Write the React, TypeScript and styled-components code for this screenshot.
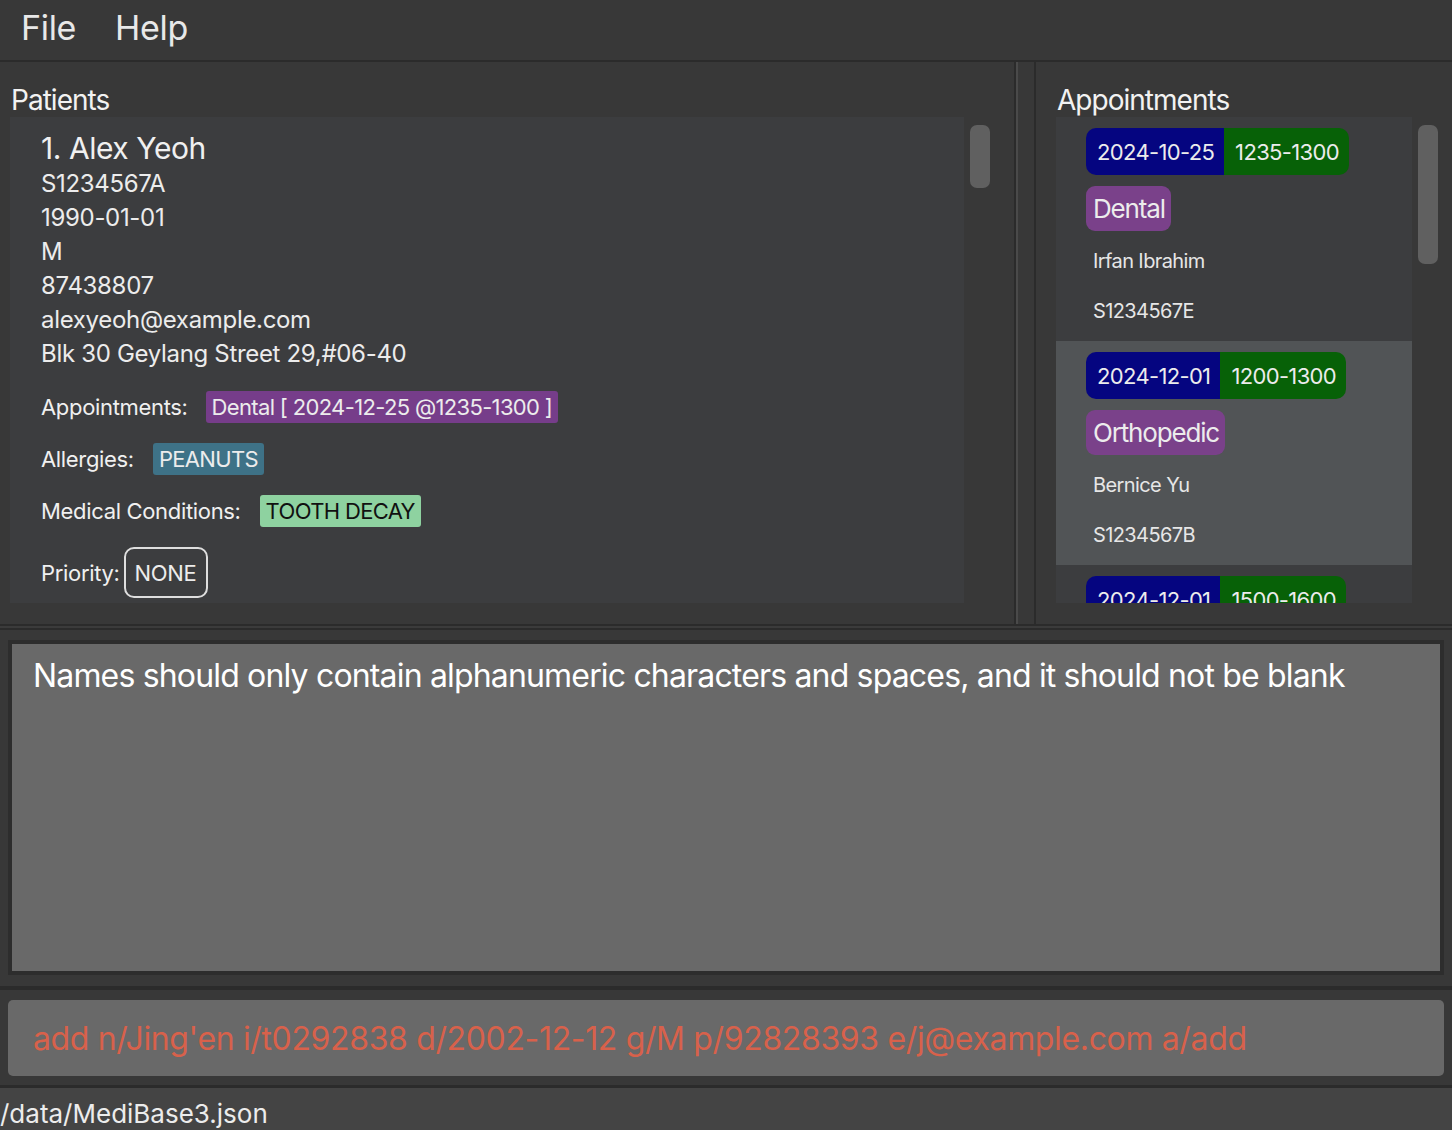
import styled, { createGlobalStyle } from "styled-components";

const GlobalStyle = createGlobalStyle`
  html, body {
    margin: 0;
    padding: 0;
    background: #383838;
    font-family: Inter, "Noto Sans", "Liberation Sans", sans-serif;
    color: #ececec;
  }
  * {
    box-sizing: border-box;
  }
`;

const Window = styled.div`
  width: 1452px;
  height: 1130px;
  display: flex;
  flex-direction: column;
  overflow: hidden;
  background: #383838;
  letter-spacing: -0.02em;
`;

const MenuBar = styled.div`
  height: 62px;
  flex-shrink: 0;
  display: flex;
  align-items: center;
  gap: 39px;
  padding: 0 0 6px 21px;
  border-bottom: 2px solid #2b2b2b;
  font-size: 34px;
  color: #e8e8e8;
`;

const MenuItem = styled.span`
  cursor: default;
`;

const TopSplit = styled.div`
  height: 564px;
  flex-shrink: 0;
  display: flex;
  border-bottom: 2px solid #2b2b2b;
`;

const Pane = styled.section<{ $width?: number; $padLeft: number }>`
  ${(p) => (p.$width ? `width: ${p.$width}px;` : "flex: 1;")}
  display: flex;
  flex-direction: column;
  padding: 0 0 21px ${(p) => p.$padLeft}px;
  background: #383838;
`;

const LeftPane = styled(Pane)`
  border-right: 2px solid #2b2b2b;
`;

const RightPane = styled(Pane)`
  border-left: 2px solid #2b2b2b;
`;

const VDivider = styled.div`
  width: 18px;
  border-left: 2px solid #4a4a4a;
`;

const PaneTitle = styled.div`
  height: 55px;
  padding: 22px 0 0 1px;
  font-size: 28px;
  line-height: 33px;
  letter-spacing: -0.035em;
  color: #f2f2f2;
`;

const ListArea = styled.div`
  flex: 1;
  display: flex;
  min-height: 0;
`;

const List = styled.div<{ $width: number }>`
  width: ${(p) => p.$width}px;
  background: #3c3d3f;
  overflow: hidden;
`;

const ScrollTrack = styled.div`
  width: 36px;
  padding: 8px 0 0 6px;
`;

const Thumb = styled.div<{ $height: number }>`
  width: 20px;
  height: ${(p) => p.$height}px;
  border-radius: 7px;
  background: #606060;
`;

/* patient card */

const PatientCard = styled.div`
  padding: 12px 0 0 31px;
`;

const PatientName = styled.div`
  font-size: 30px;
  line-height: 38px;
  color: #f0f0f0;
  letter-spacing: -0.015em;
`;

const PatientLine = styled.div`
  font-size: 24px;
  line-height: 34px;
  color: #ececec;
`;

const FieldRow = styled.div<{ $gap: number; $top: number }>`
  display: flex;
  align-items: center;
  gap: ${(p) => p.$gap}px;
  margin-top: ${(p) => p.$top}px;
  font-size: 22px;
  color: #f0f0f0;
  letter-spacing: -0.015em;
`;

const Tag = styled.span<{ $bg: string; $fg?: string }>`
  display: inline-flex;
  align-items: center;
  height: 32px;
  padding: 0 6px;
  border-radius: 3px;
  background: ${(p) => p.$bg};
  color: ${(p) => p.$fg || "#ececec"};
  font-size: 22px;
  letter-spacing: -0.03em;
`;

const PriorityBox = styled.span`
  display: inline-flex;
  align-items: center;
  justify-content: center;
  width: 84px;
  height: 51px;
  border: 2px solid #dedede;
  border-radius: 10px;
  font-size: 22px;
  color: #ececec;
`;

/* appointment card */

const ApptCard = styled.div<{ $alt?: boolean }>`
  height: 224px;
  padding: 11px 0 0 30px;
  background: ${(p) => (p.$alt ? "#515456" : "#3c3d3f")};
`;

const SlotRow = styled.div`
  display: flex;
`;

const Slot = styled.span<{ $bg: string; $side: "left" | "right" }>`
  display: inline-flex;
  align-items: center;
  height: 47px;
  padding: 0 10px 0 11px;
  background: ${(p) => p.$bg};
  font-size: 22px;
  letter-spacing: -0.03em;
  color: #ececec;
  border-radius: ${(p) => (p.$side === "left" ? "10px 0 0 10px" : "0 10px 10px 0")};
`;

const TypeTag = styled.span`
  display: inline-flex;
  align-items: center;
  height: 45px;
  margin-top: 11px;
  padding: 0 6px 0 7px;
  border-radius: 9px;
  background: #7a418a;
  font-size: 26px;
  letter-spacing: -0.045em;
  color: #ececec;
`;

const ApptLine = styled.div<{ $first?: boolean }>`
  height: 50px;
  margin-top: ${(p) => (p.$first ? 5 : 0)}px;
  padding-left: 7px;
  display: flex;
  align-items: center;
  font-size: 20px;
  letter-spacing: -0.03em;
  color: #e6e6e6;
`;

/* bottom section */

const HDivider = styled.div`
  height: 2px;
  flex-shrink: 0;
  background: #3b3b3b;
`;

const ResultPane = styled.div`
  height: 362px;
  flex-shrink: 0;
  padding: 10px 8px 11px 8px;
  border-top: 2px solid #2b2b2b;
  border-bottom: 4px solid #2b2b2b;
`;

const ResultBox = styled.div`
  height: 100%;
  border: 4px solid #2d2d2d;
  background: #696969;
  padding: 12px 0 0 21px;
  font-size: 32px;
  line-height: 40px;
  letter-spacing: -0.026em;
  color: #ffffff;
`;

const CommandPane = styled.div`
  height: 98px;
  flex-shrink: 0;
  padding: 10px 8px 9px 8px;
  border-bottom: 3px solid #2b2b2b;
`;

const CommandBox = styled.div`
  height: 76px;
  display: flex;
  align-items: center;
  padding-left: 25px;
  border-radius: 5px;
  background: #696969;
  font-size: 32px;
  letter-spacing: -0.011em;
  color: #d8614b;
`;

const StatusBar = styled.div`
  flex: 1;
  background: #444444;
  display: flex;
  align-items: flex-end;
  font-size: 26px;
  line-height: 32px;
  letter-spacing: 0;
  color: #ececec;
`;

const patient = {
  name: "Alex Yeoh",
  nric: "S1234567A",
  dob: "1990-01-01",
  gender: "M",
  phone: "87438807",
  email: "alexyeoh@example.com",
  address: "Blk 30 Geylang Street 29,#06-40",
};

const appointments = [
  { date: "2024-10-25", time: "1235-1300", type: "Dental", name: "Irfan Ibrahim", nric: "S1234567E" },
  { date: "2024-12-01", time: "1200-1300", type: "Orthopedic", name: "Bernice Yu", nric: "S1234567B" },
  { date: "2024-12-01", time: "1500-1600", type: "Dental", name: "Charlotte Oliveiro", nric: "S1234567C" },
];

const App = () => {
  return (
    <>
      <GlobalStyle />
      <Window>
        <MenuBar>
          <MenuItem>File</MenuItem>
          <MenuItem>Help</MenuItem>
        </MenuBar>

        <TopSplit>
          <LeftPane $width={1016} $padLeft={10}>
            <PaneTitle>Patients</PaneTitle>
            <ListArea>
              <List $width={954}>
                <PatientCard>
                  <PatientName>1. {patient.name}</PatientName>
                  <PatientLine>{patient.nric}</PatientLine>
                  <PatientLine>{patient.dob}</PatientLine>
                  <PatientLine>{patient.gender}</PatientLine>
                  <PatientLine>{patient.phone}</PatientLine>
                  <PatientLine>{patient.email}</PatientLine>
                  <PatientLine>{patient.address}</PatientLine>
                  <FieldRow $gap={18} $top={20}>
                    Appointments:
                    <Tag $bg="#763d8a">Dental [ 2024-12-25 @1235-1300 ]</Tag>
                  </FieldRow>
                  <FieldRow $gap={19} $top={20}>
                    Allergies:
                    <Tag $bg="#3e7287">PEANUTS</Tag>
                  </FieldRow>
                  <FieldRow $gap={19} $top={20}>
                    Medical Conditions:
                    <Tag $bg="#8ed2a0" $fg="#111111">TOOTH DECAY</Tag>
                  </FieldRow>
                  <FieldRow $gap={4} $top={20}>
                    Priority:
                    <PriorityBox>NONE</PriorityBox>
                  </FieldRow>
                </PatientCard>
              </List>
              <ScrollTrack>
                <Thumb $height={63} />
              </ScrollTrack>
            </ListArea>
          </LeftPane>

          <VDivider />

          <RightPane $padLeft={20}>
            <PaneTitle>Appointments</PaneTitle>
            <ListArea>
              <List $width={356}>
                {appointments.map((a, i) => (
                  <ApptCard key={i} $alt={i % 2 === 1}>
                    <SlotRow>
                      <Slot $bg="#050580" $side="left">{a.date}</Slot>
                      <Slot $bg="#076107" $side="right">{a.time}</Slot>
                    </SlotRow>
                    <TypeTag>{a.type}</TypeTag>
                    <ApptLine $first>{a.name}</ApptLine>
                    <ApptLine>{a.nric}</ApptLine>
                  </ApptCard>
                ))}
              </List>
              <ScrollTrack>
                <Thumb $height={139} />
              </ScrollTrack>
            </ListArea>
          </RightPane>
        </TopSplit>

        <HDivider />

        <ResultPane>
          <ResultBox>
            Names should only contain alphanumeric characters and spaces, and it should not be blank
          </ResultBox>
        </ResultPane>

        <CommandPane>
          <CommandBox>
            add n/Jing'en i/t0292838 d/2002-12-12 g/M p/92828393 e/j@example.com a/add
          </CommandBox>
        </CommandPane>

        <StatusBar>/data/MediBase3.json</StatusBar>
      </Window>
    </>
  );
};

export default App;
